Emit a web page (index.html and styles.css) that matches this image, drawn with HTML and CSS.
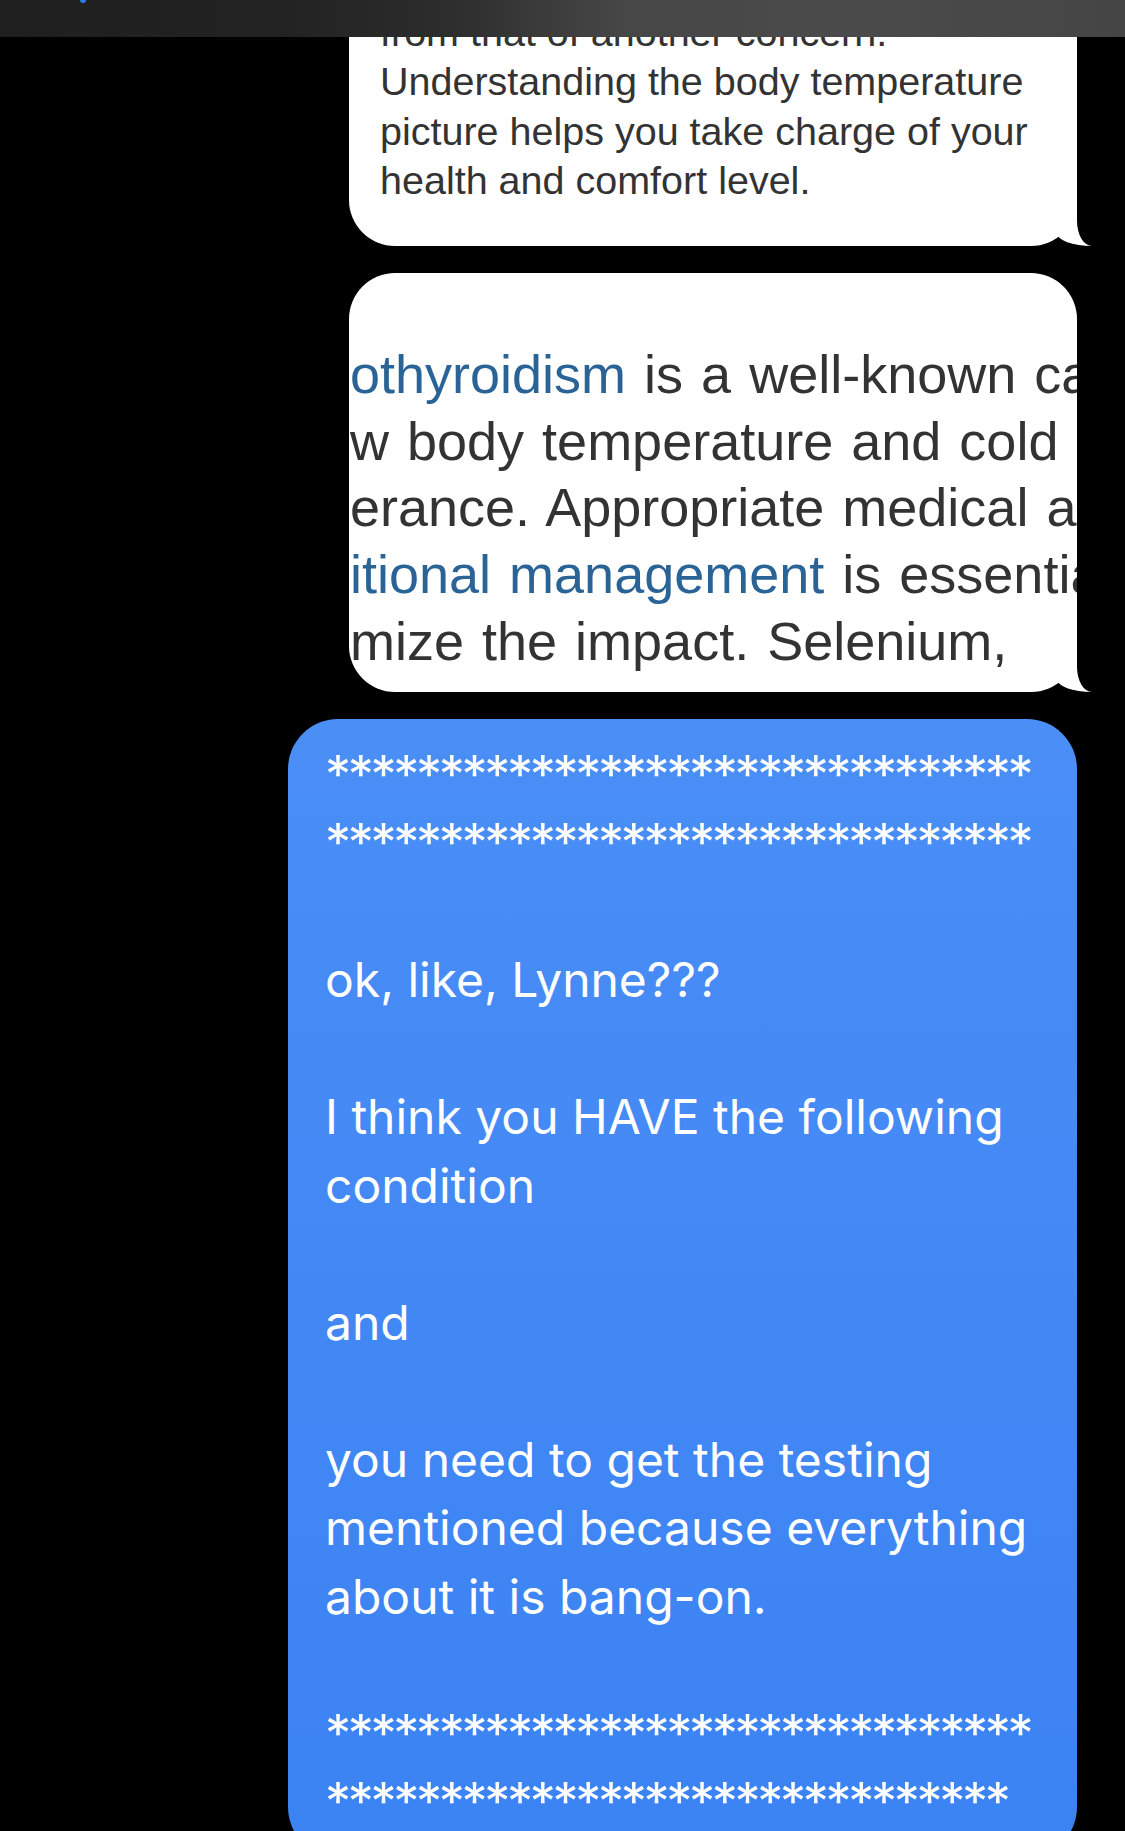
FILE: index.html
```html
<!DOCTYPE html>
<html lang="en">
<head>
    <meta charset="UTF-8">
    <meta name="viewport" content="width=device-width, initial-scale=1.0">
    <link rel="stylesheet" href="styles.css">
    <title>Messages</title>
</head>
<body>
    <div class="topbar">
        <span class="back-tip"></span>
    </div>

    <div class="thread">
        <!-- shared screenshot, scrolled partly under the bar -->
        <div class="bubble shot tail">
            <div class="shot-text small">
                <div class="ln">from that of another concern.</div>
                <div class="ln">Understanding the body temperature</div>
                <div class="ln">picture helps you take charge of your</div>
                <div class="ln">health and comfort level.</div>
            </div>
        </div>

        <!-- zoomed-in screenshot, cropped on both sides -->
        <div class="bubble shot tail">
            <div class="shot-clip">
                <div class="shot-text big">
                    <div class="ln"><a href="#">othyroidism</a> is a well-known cause of</div>
                    <div class="ln">w body temperature and cold intolerance</div>
                    <div class="ln">erance. Appropriate medical and</div>
                    <div class="ln"><a href="#">itional management</a> is essential to</div>
                    <div class="ln">mize the impact. Selenium,</div>
                </div>
            </div>
        </div>

        <div class="bubble sent">
            <p class="stars">*******************************<br>*******************************</p>
            <p>ok, like, Lynne???</p>
            <p>I think you HAVE the following<br>condition</p>
            <p>and</p>
            <p>you need to get the testing<br>mentioned because everything<br>about it is bang-on.</p>
            <p class="stars">*******************************<br>******************************</p>
        </div>
    </div>
</body>
</html>
```

FILE: styles.css
```css
body {
    margin: 0;
    background: #000;
    height: 1831px;
    overflow: hidden;
}

/* Blurred nav bar on top */
.topbar {
    position: fixed;
    top: 0;
    left: 0;
    right: 0;
    height: 37px;
    background: linear-gradient(90deg, #1f1f1f 0%, #222 25%, #2d2d2d 40%, #464646 55%, #4b4b4b 75%, #454545 100%);
    z-index: 10;
}

.back-tip {
    position: absolute;
    left: 80px;
    top: -4px;
    width: 6px;
    height: 7px;
    border-radius: 50%;
    background: #2f7cf6;
}

/* Message list */
.thread {
    display: flex;
    flex-direction: column;
    align-items: flex-end;
    gap: 27px;
    padding-right: 48px;
    margin-top: -40px; /* scrolled */
}

.bubble {
    position: relative;
    border-radius: 46px;
}

/* Image attachments (screenshots of a web page) */
.shot {
    width: 728px;
    background: #fff;
    color: #333;
    font-family: "Liberation Sans", Arial, sans-serif;
}

.shot-clip {
    overflow: hidden;
    border-radius: inherit;
}

.shot-text .ln {
    white-space: nowrap;
}

.shot-text a {
    color: #2a6496;
    text-decoration: none;
}

.small {
    font-size: 39.5px;
    line-height: 49.3px;
    padding: 48px 0 41px 31px;
}

.big {
    font-size: 54px;
    line-height: 66.8px;
    word-spacing: 3px;
    padding: 67.6px 0 17.4px 1px;
}

/* iMessage tail on the bottom right */
.tail::before {
    content: "";
    position: absolute;
    right: -15px;
    bottom: 0;
    width: 35px;
    height: 50px;
    background: #fff;
    border-bottom-left-radius: 35px 13px;
}

.tail::after {
    content: "";
    position: absolute;
    right: -40px;
    bottom: 0;
    width: 40px;
    height: 56px;
    background: #000;
    border-bottom-left-radius: 15px 25px;
}

/* Sent blue bubble */
.sent {
    width: 789px;
    box-sizing: border-box;
    padding: 21.5px 40px 20px 37px;
    border-radius: 50px;
    background: linear-gradient(180deg, #4a8ef6 0%, #3b82f3 100%);
    color: #fff;
    font-family: Inter, "Noto Sans", sans-serif;
    font-size: 48px;
    line-height: 68.5px;
}

.sent p {
    margin: 0 0 68.5px;
}

.sent p:last-child {
    margin-bottom: 0;
}

.stars {
    white-space: nowrap;
    font-size: 52px;
    letter-spacing: -3.3px;
}
```
